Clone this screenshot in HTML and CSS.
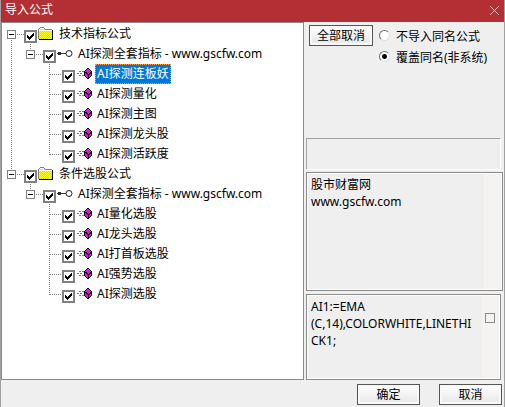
FILE: index.html
```
<!DOCTYPE html>
<html lang="zh-CN">
<head>
    <meta charset="UTF-8">
    <meta name="viewport" content="width=device-width, initial-scale=1.0">
    <title>导入公式</title>
    <link rel="stylesheet" href="styles.css">
</head>
<body>
    <!-- Shared tree icons -->
    <svg class="defs" width="0" height="0" aria-hidden="true">
        <defs>
            <pattern id="dots" width="2" height="2" patternUnits="userSpaceOnUse">
                <path fill="#ffff20" d="M0 0h2v2H0z"/>
                <path fill="#d0d070" d="M0 0h1v1H0zM1 1h1v1H1z"/>
            </pattern>
            <symbol id="folder" viewBox="0 0 16 14">
                <path fill="#000" d="M1 12h14v1H1zM14 3h1v10h-1z"/>
                <path fill="#808080" d="M0 2h1v10H0zM1 1h1v1H1zM2 0h4v1H2zM6 1h1v1H6zM7 2h7v1H7z"/>
                <path fill="url(#dots)" d="M1 2h1V1h4v1h1v1h7v9H1z"/>
                <path fill="#fff" d="M2 1h4v1H2zM1 3h6v1H1zM7 3h7v1H7z"/>
            </symbol>
            <symbol id="key" viewBox="0 0 16 14">
                <path fill="#333" d="M1 5h3v1H1zM1 7h3v1H1zM0 6h9v1H0z"/>
                <circle cx="12" cy="6.5" r="3" fill="#fff" stroke="#222"/>
            </symbol>
            <symbol id="item" viewBox="0 0 16 14">
                <path stroke="#808080" stroke-dasharray="2 1" d="M2 4.5h5M0 6.5h6M2 8.5h6"/>
                <path fill="#000" d="M10 1h2v1h1v1h1v1h1v5h-1v1h-1v1h-1v1h-2v-1H9v-1H8V9H7V4h1V3h1V2h1z"/>
                <path fill="#f0f" d="M10 2h2v1h1v1h1v1h-1v1h-1v1h-1V6h-1V5H8V4h1V3h1zM8 6h1v1h1v1h1v3h-1v-1H9V9H8zM12 8h1V7h1v2h-1v1h-1z"/>
            </symbol>
        </defs>
    </svg>

    <header class="title-bar">
        <h1>导入公式</h1>
        <button class="close" type="button" aria-label="关闭">
            <svg width="9" height="9" viewBox="0 0 9 9"><path d="M0 0l9 9M9 0l-9 9" stroke="#e8b5b6"/></svg>
        </button>
    </header>

    <main>
        <!-- Formula tree -->
        <section class="tree">
            <ul>
                <li>
                    <div class="row"><button class="toggle" type="button" aria-label="折叠"></button><span class="line"></span><input type="checkbox" id="g1" checked><svg class="icon"><use href="#folder"/></svg><label for="g1">技术指标公式</label></div>
                    <ul>
                        <li>
                            <div class="row"><button class="toggle" type="button" aria-label="折叠"></button><span class="line"></span><input type="checkbox" id="g2" checked><svg class="icon"><use href="#key"/></svg><label for="g2">AI探测全套指标 - www.gscfw.com</label></div>
                            <ul>
                                <li><div class="row leaf"><span class="line"></span><input type="checkbox" id="a1" checked><svg class="icon"><use href="#item"/></svg><label class="selected" for="a1">AI探测连板妖</label></div></li>
                                <li><div class="row leaf"><span class="line"></span><input type="checkbox" id="a2" checked><svg class="icon"><use href="#item"/></svg><label for="a2">AI探测量化</label></div></li>
                                <li><div class="row leaf"><span class="line"></span><input type="checkbox" id="a3" checked><svg class="icon"><use href="#item"/></svg><label for="a3">AI探测主图</label></div></li>
                                <li><div class="row leaf"><span class="line"></span><input type="checkbox" id="a4" checked><svg class="icon"><use href="#item"/></svg><label for="a4">AI探测龙头股</label></div></li>
                                <li><div class="row leaf"><span class="line"></span><input type="checkbox" id="a5" checked><svg class="icon"><use href="#item"/></svg><label for="a5">AI探测活跃度</label></div></li>
                            </ul>
                        </li>
                    </ul>
                </li>
                <li>
                    <div class="row"><button class="toggle" type="button" aria-label="折叠"></button><span class="line"></span><input type="checkbox" id="g3" checked><svg class="icon"><use href="#folder"/></svg><label for="g3">条件选股公式</label></div>
                    <ul>
                        <li>
                            <div class="row"><button class="toggle" type="button" aria-label="折叠"></button><span class="line"></span><input type="checkbox" id="g4" checked><svg class="icon"><use href="#key"/></svg><label for="g4">AI探测全套指标 - www.gscfw.com</label></div>
                            <ul>
                                <li><div class="row leaf"><span class="line"></span><input type="checkbox" id="b1" checked><svg class="icon"><use href="#item"/></svg><label for="b1">AI量化选股</label></div></li>
                                <li><div class="row leaf"><span class="line"></span><input type="checkbox" id="b2" checked><svg class="icon"><use href="#item"/></svg><label for="b2">AI龙头选股</label></div></li>
                                <li><div class="row leaf"><span class="line"></span><input type="checkbox" id="b3" checked><svg class="icon"><use href="#item"/></svg><label for="b3">AI打首板选股</label></div></li>
                                <li><div class="row leaf"><span class="line"></span><input type="checkbox" id="b4" checked><svg class="icon"><use href="#item"/></svg><label for="b4">AI强势选股</label></div></li>
                                <li><div class="row leaf"><span class="line"></span><input type="checkbox" id="b5" checked><svg class="icon"><use href="#item"/></svg><label for="b5">AI探测选股</label></div></li>
                            </ul>
                        </li>
                    </ul>
                </li>
            </ul>
        </section>

        <!-- Options and formula details -->
        <section class="side">
            <div class="options">
                <button class="btn" type="button">全部取消</button>
                <div class="radios">
                    <label><input type="radio" name="same" value="skip">不导入同名公式</label>
                    <label><input type="radio" name="same" value="cover" checked>覆盖同名(非系统)</label>
                </div>
            </div>
            <div class="status"></div>
            <div class="box note">
                <textarea aria-label="说明" readonly>股市财富网
www.gscfw.com</textarea>
                <div class="scroll"></div>
            </div>
            <div class="box code">
                <textarea aria-label="公式源码" readonly>AI1:=EMA
(C,14),COLORWHITE,LINETHI
CK1;</textarea>
                <div class="scroll"><span class="mark"></span></div>
            </div>
        </section>
    </main>

    <footer>
        <button class="btn" type="button">确定</button>
        <button class="btn" type="button">取消</button>
    </footer>
</body>
</html>
```
FILE: styles.css
```
* {
    box-sizing: border-box;
}
body {
    display: flex;
    flex-direction: column;
    min-height: 100vh;
    margin: 0;
    background-color: #efefef;
    border-left: 1px solid #a0a0a0;
    border-right: 1px solid #a0a0a0;
    color: #000;
}
body, button, textarea {
    font-family: "Noto Sans", "Noto Sans CJK SC", sans-serif;
    font-size: 12px;
}
.defs {
    position: absolute;
}
.title-bar {
    display: flex;
    align-items: center;
    justify-content: space-between;
    height: 22px;
    margin: 0 -1px;
    padding: 0 6px 2px 5px;
    background-color: #b42f33;
    color: #fff;
}
.title-bar h1 {
    margin: 0;
    font-size: 12px;
    font-weight: normal;
    line-height: 20px;
}
.close {
    display: flex;
    padding: 0;
    border: none;
    background: none;
}
main {
    flex: 1;
    display: grid;
    grid-template-columns: 1fr 200px;
}

/* Tree */
.tree {
    padding: 1px 5px;
    border: 1px solid #8a8a8a;
    background-color: #fff;
}
.tree ul {
    margin: 0;
    padding: 0;
    list-style: none;
}
.tree ul ul {
    padding-left: 19px;
}
.tree li {
    background: repeating-linear-gradient(#808080 0 1px, transparent 1px 2px) 4px 0 / 1px 100% no-repeat;
}
.tree li:last-child {
    background-size: 1px 11px;
}
.tree > ul > li:first-child {
    background-position: 4px 10px;
}
.row {
    display: flex;
    align-items: center;
    height: 20px;
}
.toggle {
    width: 9px;
    height: 9px;
    padding: 0;
    border: 1px solid #808080;
    background: linear-gradient(#000, #000) center / 5px 1px no-repeat #fff;
}
.line {
    width: 8px;
    height: 1px;
    background: repeating-linear-gradient(90deg, transparent 0 1px, #808080 1px 2px);
}
.leaf .line {
    width: 12px;
    margin: 0 1px 0 4px;
}
.row input {
    appearance: none;
    width: 13px;
    height: 13px;
    margin: 4px 1px 0 0;
    border: 2px solid #808080;
    background-color: #fff;
}
.row input:checked {
    background-image: url("data:image/svg+xml,%3Csvg xmlns='http://www.w3.org/2000/svg' width='9' height='9'%3E%3Cpath d='M1 3h1v1h1v1h1V4h1V3h1V2h1V1h1v3H7v1H6v1H5v1H4v1H3V7H2V6H1z'/%3E%3C/svg%3E");
    background-repeat: no-repeat;
}
.icon {
    width: 16px;
    height: 14px;
    margin-right: 3px;
}
.leaf .icon {
    margin: 0 2px 0 1px;
}
.row label {
    padding: 0 2px;
    line-height: 20px;
}
.row .selected {
    padding: 0 1px;
    border: 1px dotted #f0a050;
    background-color: #0078d7;
    color: #fff;
    line-height: 18px;
}

/* Right side */
.side {
    display: flex;
    flex-direction: column;
    padding: 3px 1px 0 2px;
}
.options {
    display: flex;
    gap: 6px;
    min-height: 113px;
    padding-left: 3px;
}
.radios label {
    display: flex;
    align-items: center;
    height: 21px;
}
.radios input {
    appearance: none;
    width: 11px;
    height: 11px;
    margin: 0 6px 0 0;
    border: 1px solid;
    border-color: #707070 #e0e0e0 #e0e0e0 #707070;
    border-radius: 50%;
    background-color: #fff;
}
.radios input:checked {
    background-image: radial-gradient(circle, #000 2px, transparent 3px);
}
.btn {
    height: 21px;
    padding: 0 7px;
    border: 1px solid #555;
    background: linear-gradient(#fff, #e6e6e6);
    box-shadow: inset 0 0 0 2px #f8f8f8;
    line-height: 16px;
}
.status {
    height: 32px;
    margin: 0 2px 2px 0;
    border: 1px solid;
    border-color: #a0a0a0 #fff #fff #a0a0a0;
}
.box {
    display: flex;
    border: 1px solid #8a8a8a;
    box-shadow: inset 0 0 0 1px #fff;
    padding: 1px;
}
.box textarea {
    flex: 1;
    min-width: 0;
    padding: 2px 0 0 3px;
    border: none;
    outline: none;
    resize: none;
    overflow: hidden;
    background-color: #efefef;
    line-height: 17px;
}
.note {
    height: 119px;
    margin-bottom: 3px;
}
.code {
    flex: 1;
    min-height: 86px;
    margin-right: 2px;
}
.scroll {
    width: 17px;
    padding: 17px 3px;
    background-color: #f4f3f1;
}
.mark {
    display: block;
    width: 10px;
    height: 10px;
    border: 1px solid #8a8a8a;
}

footer {
    display: flex;
    justify-content: flex-end;
    gap: 19px;
    padding: 4px 2px 2px;
}
footer .btn {
    width: 63px;
}
```
